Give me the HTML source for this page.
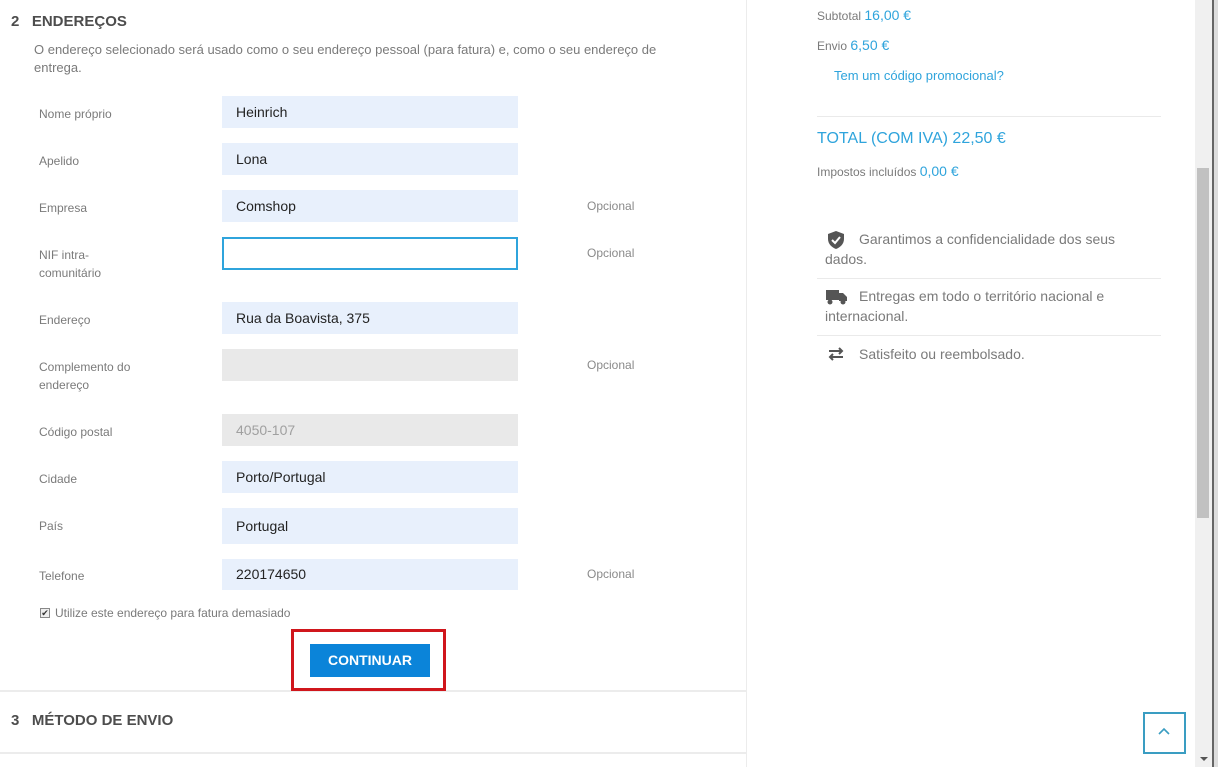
<!DOCTYPE html>
<html><head><meta charset="utf-8"><style>
*{margin:0;padding:0;box-sizing:border-box}
body{width:1218px;height:767px;overflow:hidden;background:#fff;font-family:"Liberation Sans",Arial,sans-serif;position:relative;color:#7a7a7a}
.a{position:absolute;white-space:nowrap}
.lbl{position:absolute;left:39px;font-size:12px;color:#7a7a7a;line-height:18px}
.in{position:absolute;left:222px;width:296px;height:32px;background:#e8f0fc;font-size:14px;color:#232323;padding-left:14px;line-height:32px}
.op{position:absolute;left:587px;font-size:12px;color:#8a8a8a}
.blue{color:#2fa4dc}
.tr{position:absolute;left:825px;font-size:14px;color:#7a7a7a;line-height:20px;width:310px}
</style></head><body>
<div class="a" style="left:746px;top:0;width:1px;height:767px;background:#ececec"></div>
<div class="a" style="left:0;top:690px;width:746px;height:2px;background:#ececec"></div>
<div class="a" style="left:0;top:752px;width:746px;height:2px;background:#ececec"></div>

<div class="a" style="left:11px;top:13px;font-size:15px;font-weight:bold;color:#4d4d4d">2&nbsp;&nbsp;&nbsp;ENDEREÇOS</div>
<div class="a" style="left:34px;top:41px;font-size:13px;line-height:18px;color:#7a7a7a;white-space:normal;width:660px">O endereço selecionado será usado como o seu endereço pessoal (para fatura) e, como o seu endereço de entrega.</div>

<div class="lbl" style="top:105px">Nome próprio</div><div class="in" style="top:96px">Heinrich</div>
<div class="lbl" style="top:152px">Apelido</div><div class="in" style="top:143px">Lona</div>
<div class="lbl" style="top:199px">Empresa</div><div class="in" style="top:190px">Comshop</div><div class="op" style="top:199px">Opcional</div>
<div class="lbl" style="top:246px">NIF intra-<br>comunitário</div><div class="in" style="top:237px;background:#fff;border:2px solid #2fa4dc;height:33px"></div><div class="op" style="top:246px">Opcional</div>
<div class="lbl" style="top:311px">Endereço</div><div class="in" style="top:302px">Rua da Boavista, 375</div>
<div class="lbl" style="top:358px">Complemento do<br>endereço</div><div class="in" style="top:349px;background:#e9e9e9"></div><div class="op" style="top:358px">Opcional</div>
<div class="lbl" style="top:423px">Código postal</div><div class="in" style="top:414px;background:#e9e9e9;color:#a0a0a0">4050-107</div>
<div class="lbl" style="top:470px">Cidade</div><div class="in" style="top:461px">Porto/Portugal</div>
<div class="lbl" style="top:517px">País</div><div class="in" style="top:508px;height:36px;line-height:36px">Portugal</div>
<div class="lbl" style="top:567px">Telefone</div><div class="in" style="top:559px;height:31px;line-height:31px">220174650</div><div class="op" style="top:567px">Opcional</div>

<div class="a" style="left:40px;top:608px;width:10px;height:10px;border:1px solid #888;background:#eee;font-size:9px;line-height:8px;text-align:center;color:#333">✔</div>
<div class="a" style="left:55px;top:606px;font-size:12px;color:#7a7a7a">Utilize este endereço para fatura demasiado</div>

<div class="a" style="left:291px;top:629px;width:155px;height:62px;border:3px solid #d0161c"></div>
<div class="a" style="left:310px;top:644px;width:120px;height:33px;background:#0b84d9;color:#fff;font-size:14px;font-weight:bold;text-align:center;line-height:33px">CONTINUAR</div>

<div class="a" style="left:11px;top:712px;font-size:15px;font-weight:bold;color:#4d4d4d">3&nbsp;&nbsp;&nbsp;MÉTODO DE ENVIO</div>

<div class="a" style="left:817px;top:7px;font-size:12px;color:#7a7a7a">Subtotal <span class="blue" style="font-size:14px">16,00 €</span></div>
<div class="a" style="left:817px;top:37px;font-size:12px;color:#7a7a7a">Envio <span class="blue" style="font-size:14px">6,50 €</span></div>
<div class="a blue" style="left:834px;top:68px;font-size:13px">Tem um código promocional?</div>
<div class="a" style="left:817px;top:116px;width:344px;height:1px;background:#eaeaea"></div>
<div class="a blue" style="left:817px;top:130px;font-size:16px">TOTAL (COM IVA) 22,50 €</div>
<div class="a" style="left:817px;top:163px;font-size:12px;color:#7a7a7a">Impostos incluídos <span class="blue" style="font-size:14px">0,00 €</span></div>

<svg class="a" style="left:826px;top:230px" width="20" height="20" viewBox="0 0 20 20"><path d="M10 1 L18 4 V9 C18 14 14 17.5 10 19 C6 17.5 2 14 2 9 V4 Z" fill="#555"/><path d="M6 10 L9 13 L14 7" stroke="#fff" stroke-width="2" fill="none"/></svg>
<div class="tr" style="top:229px;text-indent:34px;left:825px">Garantimos a confidencialidade dos seus dados.</div>
<div class="a" style="left:817px;top:278px;width:344px;height:1px;background:#eaeaea"></div>
<svg class="a" style="left:826px;top:289px" width="22" height="16" viewBox="0 0 22 16"><rect x="0" y="1" width="13" height="10" fill="#555"/><path d="M13 4 H17 L21 8 V12 H13 Z" fill="#555"/><circle cx="4" cy="13" r="2.5" fill="#555"/><circle cx="17" cy="13" r="2.5" fill="#555"/></svg>
<div class="tr" style="top:286px;text-indent:34px">Entregas em todo o território nacional e internacional.</div>
<div class="a" style="left:817px;top:335px;width:344px;height:1px;background:#eaeaea"></div>
<svg class="a" style="left:827px;top:347px" width="18" height="14" viewBox="0 0 18 14"><path d="M2 4 H15 M12 1 L15 4 L12 7" stroke="#555" stroke-width="2" fill="none"/><path d="M16 10 H3 M6 7 L3 10 L6 13" stroke="#555" stroke-width="2" fill="none"/></svg>
<div class="tr" style="top:344px;text-indent:34px">Satisfeito ou reembolsado.</div>

<div class="a" style="left:1143px;top:712px;width:43px;height:42px;border:2px solid #3a9dc2"></div>
<svg class="a" style="left:1157px;top:727px" width="14" height="10" viewBox="0 0 14 10"><path d="M2 7 L7 2 L12 7" stroke="#3a9dc2" stroke-width="1.6" fill="none"/></svg>

<div class="a" style="left:1195px;top:0;width:17px;height:767px;background:#f0f0f0"></div>
<div class="a" style="left:1197px;top:168px;width:12px;height:350px;background:#c1c1c1"></div>
<div class="a" style="left:1200px;top:757px;width:0;height:0;border-left:4px solid transparent;border-right:4px solid transparent;border-top:4px solid #555"></div>
<div class="a" style="left:1212px;top:0;width:2px;height:767px;background:#666"></div>
<div class="a" style="left:1214px;top:0;width:4px;height:767px;background:#ddd"></div>
</body></html>
